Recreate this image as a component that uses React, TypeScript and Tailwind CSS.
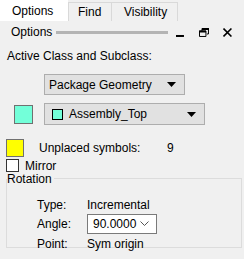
import React from 'react';

const font = { fontFamily: '"Liberation Sans", Arial, sans-serif' };

const Caret = () => (
  <svg width="9" height="5" viewBox="0 0 9 5" className="shrink-0">
    <path d="M0 0h9L4.5 5z" fill="#000" />
  </svg>
);

const Chevron = () => (
  <svg width="9" height="6" viewBox="0 0 9 6" className="shrink-0">
    <path d="M0.5 0.5L4.5 4.5L8.5 0.5" fill="none" stroke="#555" strokeWidth="1" />
  </svg>
);

export default function App() {
  return (
    <div className="w-[244px] h-[259px] bg-[#f0f0f0] text-[12px] text-black overflow-hidden leading-none" style={font}>
      {/* tabs */}
      <div className="flex h-[21px] items-end">
        <div className="w-[68px] h-[21px] bg-white flex items-center pl-[12px]">Options</div>
        <div className="w-[44px] h-[19px] border border-b-0 border-[#d9d9d9] flex items-center pl-[9px]">Find</div>
        <div className="w-[66px] h-[19px] border border-b-0 border-l-0 border-[#d9d9d9] flex items-center pl-[12px]">Visibility</div>
      </div>

      {/* header */}
      <div className="flex items-center h-[22px] pl-[11px] pr-[12px]">
        <span className="w-[42px]">Options</span>
        <div className="ml-[3px] w-[113px] h-[3px] bg-[#b4b4b4]" />
        <svg width="9" height="9" viewBox="0 0 9 9" className="ml-[8px]">
          <rect x="0" y="7" width="8" height="2" fill="#000" />
        </svg>
        <svg width="10" height="9" viewBox="0 0 10 9" className="ml-[14px]">
          <path d="M3 0.5h6.5v5.5H8M0.5 3h6.5v5.5H0.5z M3 3V0.5" fill="none" stroke="#000" strokeWidth="1" />
          <rect x="3" y="0" width="7" height="2" fill="#000" />
          <rect x="0" y="2.5" width="7" height="2" fill="#000" />
        </svg>
        <svg width="9" height="9" viewBox="0 0 9 9" className="ml-[14px]">
          <path d="M0.5 0.5L8.5 8.5M8.5 0.5L0.5 8.5" stroke="#000" strokeWidth="1.6" />
        </svg>
      </div>

      <div className="pl-[7px] mt-[7px]">Active Class and Subclass:</div>

      <div className="flex mt-[12px] pl-[44px]">
        <div className="w-[141px] h-[21px] bg-[#e1e1e1] border border-[#adadad] flex items-center justify-between pl-[4px] pr-[8px]">
          <span>Package Geometry</span>
          <Caret />
        </div>
      </div>

      <div className="flex items-center mt-[8px]">
        <div className="ml-[14px] w-[19px] h-[19px] bg-[#73ffd9] border border-[#707070]" />
        <div className="ml-[11px] w-[161px] h-[22px] bg-[#e1e1e1] border border-[#adadad] flex items-center pl-[7px] pr-[8px]">
          <div className="w-[11px] h-[11px] bg-[#73ffd9] border border-black" />
          <span className="ml-[6px]">Assembly_Top</span>
          <div className="ml-auto"><Caret /></div>
        </div>
      </div>

      <div className="flex items-center mt-[14px]">
        <div className="ml-[6px] w-[18px] h-[18px] bg-[#ffff00] border border-[#707070]" />
        <span className="ml-[15px] w-[128px]">Unplaced symbols:</span>
        <span>9</span>
      </div>

      <div className="flex items-center mt-[2px]">
        <div className="ml-[6px] w-[13px] h-[13px] bg-white border border-[#333]" />
        <span className="ml-[6px]">Mirror</span>
      </div>

      {/* rotation group */}
      <div className="mt-0 ml-[6px] w-[236px]">
        <div className="flex items-center h-[13px]">
          <span className="ml-[1px] pr-[2px]">Rotation</span>
          <div className="flex-1 h-px bg-[#dcdcdc]" />
        </div>
        <div className="border border-t-0 border-[#dcdcdc] h-[69px] -mt-[6px] pt-[19px] pl-[30px]">
          <div className="flex items-center h-[13px]">
            <span className="w-[50px]">Type:</span>
            <span>Incremental</span>
          </div>
          <div className="flex items-center mt-[3px]">
            <span className="w-[50px]">Angle:</span>
            <div className="w-[70px] h-[20px] bg-white border border-[#7a7a7a] flex items-center justify-between pl-[5px] pr-[7px]">
              <span>90.0000</span>
              <Chevron />
            </div>
          </div>
          <div className="flex items-center h-[13px] mt-[3px]">
            <span className="w-[50px]">Point:</span>
            <span>Sym origin</span>
          </div>
        </div>
      </div>
    </div>
  );
}
